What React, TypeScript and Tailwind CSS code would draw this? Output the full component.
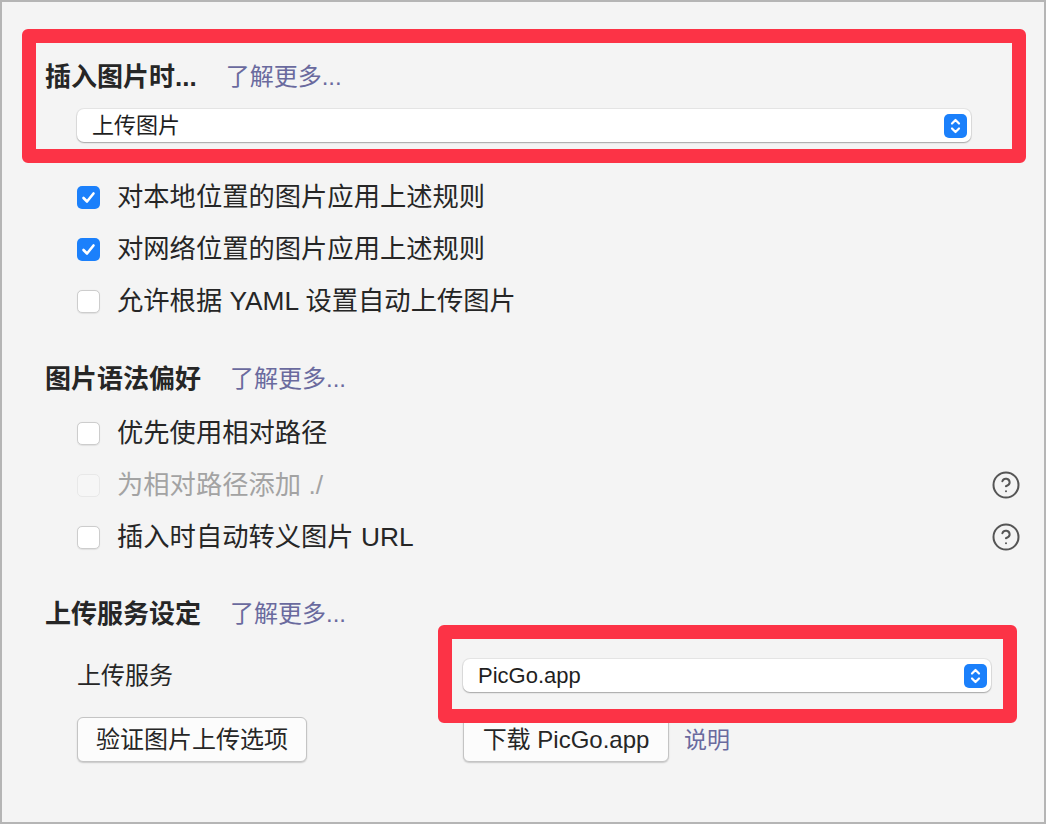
import React from 'react';
import { CircleHelp } from 'lucide-react';

const font = "font-['Liberation_Sans','Noto_Sans_CJK_SC',sans-serif]";

const Stepper: React.FC = () => (
  <div className="w-[23px] h-[24px] rounded-[5px] bg-[#1b80fb] flex items-center justify-center">
    <svg width="13" height="18" viewBox="0 0 13 18" fill="none" stroke="white" strokeWidth="2.2" strokeLinecap="round" strokeLinejoin="round">
      <path d="M3 6.5 L6.5 3 L10 6.5" />
      <path d="M3 11.5 L6.5 15 L10 11.5" />
    </svg>
  </div>
);

const Select: React.FC<{ value: string; width: string }> = ({ value, width }) => (
  <div
    className={`${width} h-[33px] bg-white rounded-[7px] flex items-center justify-between pl-[15px] pr-[4px] shadow-[0_0_0_1px_rgba(0,0,0,0.06),0_1px_1.5px_rgba(0,0,0,0.28)]`}
  >
    <span className="text-[22px] leading-[32px] text-[#1f1f1f]">{value}</span>
    <Stepper />
  </div>
);

type CheckState = 'on' | 'off' | 'disabled';

const Checkbox: React.FC<{ state: CheckState }> = ({ state }) => {
  if (state === 'on') {
    return (
      <div className="w-[23px] h-[23px] rounded-[5px] bg-[#1b80fb] flex items-center justify-center shrink-0">
        <svg width="15" height="15" viewBox="0 0 15 15" fill="none" stroke="white" strokeWidth="2.6" strokeLinecap="round" strokeLinejoin="round">
          <path d="M2.5 8 L6 11.5 L12.5 3.5" />
        </svg>
      </div>
    );
  }
  if (state === 'disabled') {
    return <div className="w-[23px] h-[23px] rounded-[5px] bg-[#f6f6f6] border border-[#e8e8e8] shrink-0" />;
  }
  return (
    <div className="w-[23px] h-[23px] rounded-[5px] bg-white border border-[#cdcdcd] shadow-[0_0.5px_1px_rgba(0,0,0,0.08)] shrink-0" />
  );
};

const CheckRow: React.FC<{ label: string; state: CheckState; help?: boolean }> = ({ label, state, help }) => (
  <div className="h-[52px] flex items-center pl-[32px]">
    <Checkbox state={state} />
    <span
      className={`ml-[17px] text-[26.3px] leading-[32px] ${state === 'disabled' ? 'text-[#a3a3a3]' : 'text-[#262626]'}`}
    >
      {label}
    </span>
    {help && <CircleHelp size={30} strokeWidth={1.6} className="ml-auto text-[#555555]" />}
  </div>
);

const Heading: React.FC<{ title: string; className?: string }> = ({ title, className = '' }) => (
  <div className={`h-[32px] flex items-center gap-[29px] ${className}`}>
    <span className="text-[26px] leading-[32px] font-bold text-[#262626]">{title}</span>
    <span className="text-[24px] leading-[32px] text-[#6a6a9e]">了解更多...</span>
  </div>
);

const Button: React.FC<{ label: string; width: string }> = ({ label, width }) => (
  <div
    className={`${width} h-[45px] rounded-[6px] bg-[#fcfcfc] border border-[#c4c4c4] shadow-[0_1px_1.5px_rgba(0,0,0,0.18)] flex items-center justify-center`}
  >
    <span className="text-[24px] leading-[32px] text-[#262626]">{label}</span>
  </div>
);

const App: React.FC = () => {
  return (
    <div className={`${font} relative w-[1046px] h-[824px] overflow-hidden border-2 border-[#b5b5b5] bg-[#f4f4f4] pl-[43px] pr-[23px] pt-[59px]`}>
      <Heading title="插入图片时..." />
      <div className="mt-[16px] ml-[32px]">
        <Select value="上传图片" width="w-[894px]" />
      </div>

      <div className="mt-[29px]">
        <CheckRow label="对本地位置的图片应用上述规则" state="on" />
        <CheckRow label="对网络位置的图片应用上述规则" state="on" />
        <CheckRow label="允许根据 YAML 设置自动上传图片" state="off" />
      </div>

      <Heading title="图片语法偏好" className="mt-[36px]" />
      <div className="mt-[12px]">
        <CheckRow label="优先使用相对路径" state="off" />
        <CheckRow label="为相对路径添加 ./" state="disabled" help />
        <CheckRow label="插入时自动转义图片 URL" state="off" help />
      </div>

      <Heading title="上传服务设定" className="mt-[35px]" />
      <div className="mt-[29px] pl-[32px] flex items-center">
        <span className="w-[386px] text-[24px] leading-[32px] text-[#262626]">上传服务</span>
        <Select value="PicGo.app" width="w-[528px]" />
      </div>
      <div className="mt-[25px] pl-[32px] flex items-center">
        <Button label="验证图片上传选项" width="w-[230px]" />
        <div className="ml-[156px] flex items-center">
          <Button label="下载 PicGo.app" width="w-[206px]" />
          <span className="ml-[15px] text-[23px] leading-[32px] text-[#6a6a9e]">说明</span>
        </div>
      </div>

      {/* annotation boxes */}
      <div className="absolute left-[20px] top-[27px] w-[1004px] h-[134px] border-[14px] border-[#fc3346] rounded-[6px] pointer-events-none" />
      <div className="absolute left-[436px] top-[623px] w-[579px] h-[98px] border-[14px] border-[#fc3346] rounded-[6px] pointer-events-none" />
    </div>
  );
};

export default App;
